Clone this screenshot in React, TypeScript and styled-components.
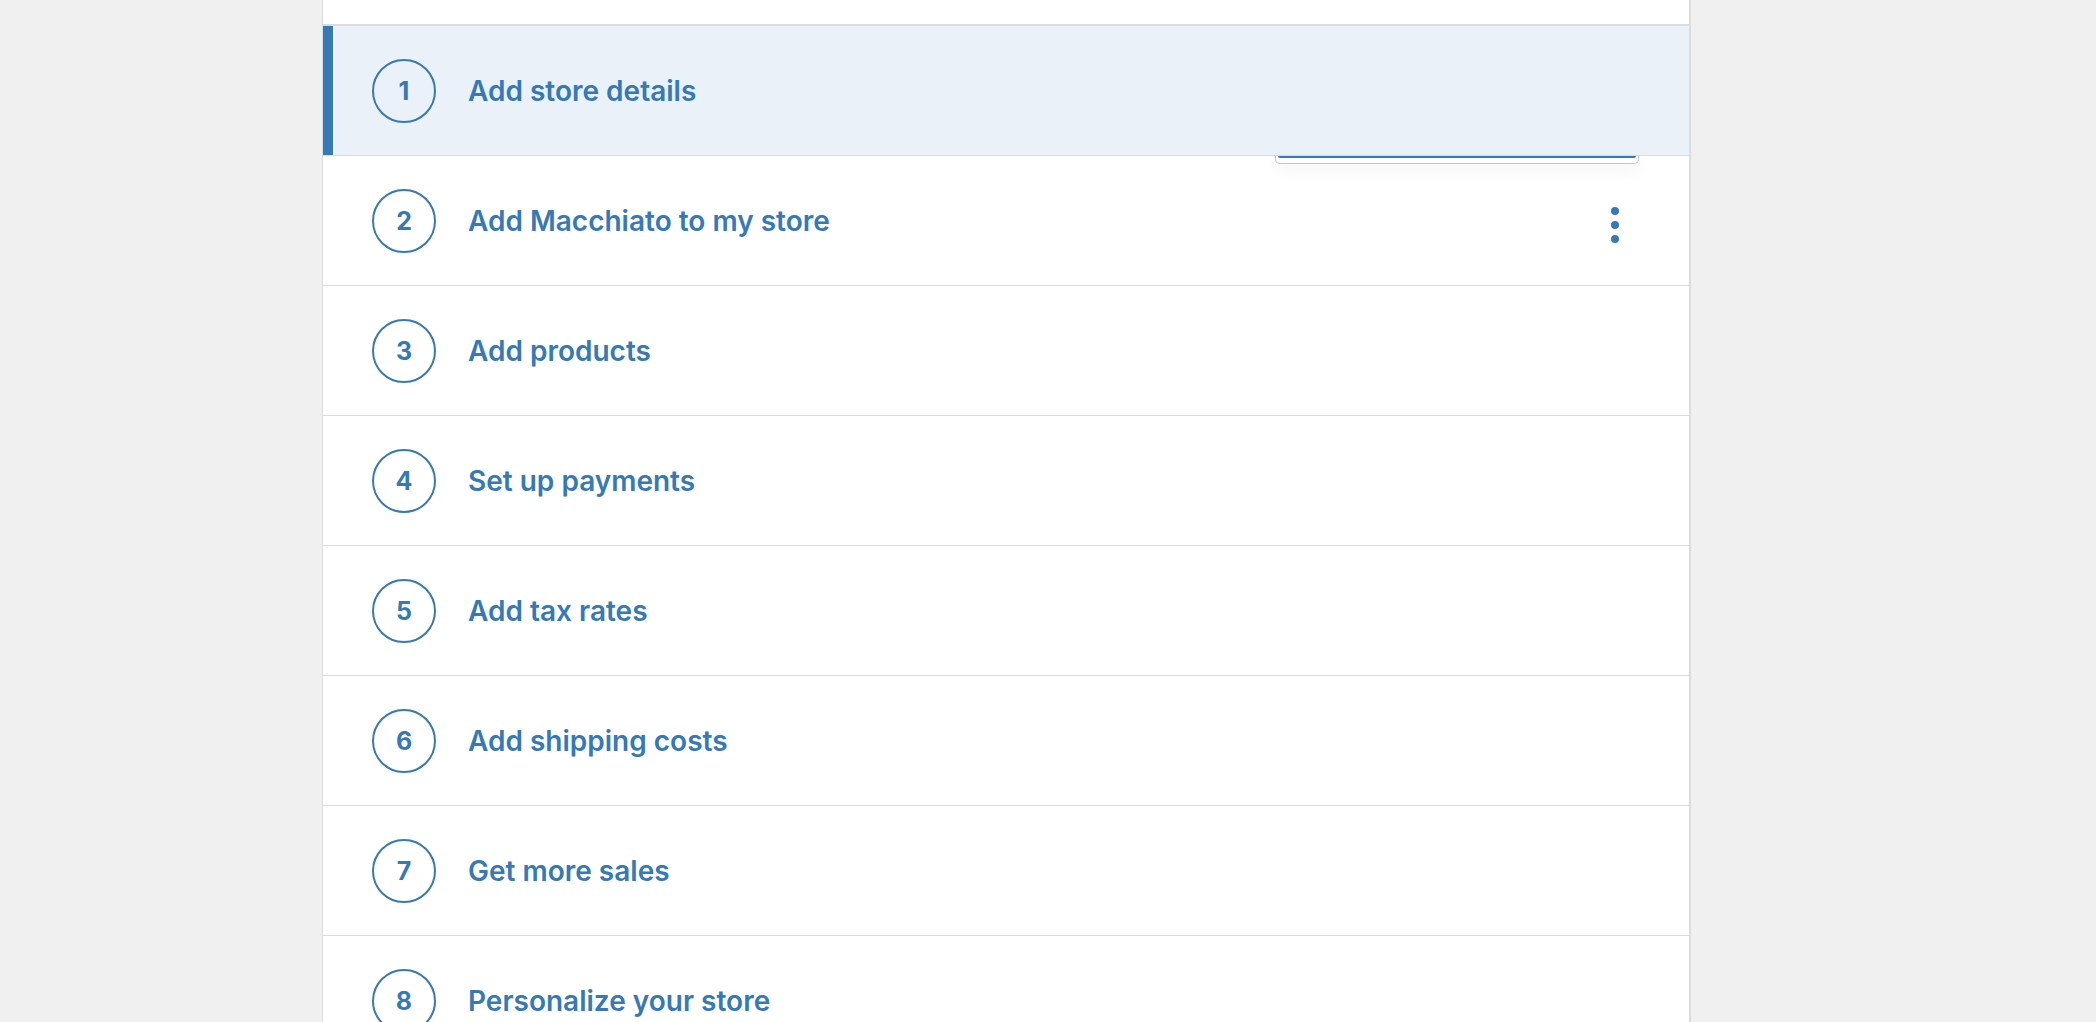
import React from "react";
import styled, { createGlobalStyle } from "styled-components";

const Global = createGlobalStyle`
  html, body { margin: 0; padding: 0; background: #f0f0f0; }
  body { font-family: Inter, "Noto Sans", "Liberation Sans", sans-serif; }
`;

const Page = styled.div`
  height: 1022px;
  overflow: hidden;
  display: flex;
  padding-left: 322px;
`;

const Panel = styled.div`
  width: 1366px;
  background: #fff;
  border-left: 1px solid #dcdcde;
  border-right: 2px solid #dcdcde;
  display: flex;
  flex-direction: column;
`;

const TopSpace = styled.div`
  height: 24px;
  flex: none;
  border-bottom: 2px solid #dcdcde;
`;

const Row = styled.div<{ $active?: boolean }>`
  position: relative;
  flex: none;
  height: 129px;
  border-bottom: 1.5px solid #dcdcde;
  display: flex;
  align-items: center;
  padding-left: 49px;
  padding-right: 70px;
  background: ${(p) => (p.$active ? "#eaf1f8" : "#fff")};
  box-shadow: ${(p) => (p.$active ? "inset 10px 0 0 #3579b6" : "none")};
`;

const Circle = styled.div`
  width: 60px;
  height: 60px;
  flex: none;
  border: 2px solid #3579b6;
  border-radius: 50%;
  display: flex;
  align-items: center;
  justify-content: center;
  color: #3579b6;
  font-size: 25px;
  font-weight: 700;
`;

const Title = styled.div`
  margin-left: 32px;
  flex: 1;
  color: #3579b6;
  font-size: 28px;
  font-weight: 600;
`;

const Kebab = styled.button`
  flex: none;
  border: 0;
  background: none;
  padding: 0;
  margin-top: 8px;
  width: 8px;
  height: 36px;
  display: flex;
  cursor: pointer;
`;

const Popover = styled.div`
  position: absolute;
  top: 0;
  left: 952px;
  width: 362px;
  height: 7px;
  background: #fff;
  border: 1.5px solid #c8c8c8;
  border-top: 0;
  border-radius: 0 0 5px 5px;
  box-shadow: 0 6px 14px rgba(0, 0, 0, 0.06);
  &::before {
    content: "";
    position: absolute;
    left: 2px;
    right: 2px;
    top: 0;
    height: 2px;
    background: #3579b6;
    border-radius: 0 0 4px 4px;
  }
`;

const steps = [
  "Add store details",
  "Add Macchiato to my store",
  "Add products",
  "Set up payments",
  "Add tax rates",
  "Add shipping costs",
  "Get more sales",
  "Personalize your store",
];

export default function App() {
  return (
    <>
      <Global />
      <Page>
        <Panel>
          <TopSpace />
          {steps.map((s, i) => (
            <Row key={s} $active={i === 0}>
              {i === 1 && <Popover />}
              <Circle>{i + 1}</Circle>
              <Title>{s}</Title>
              {i === 1 && (
                <Kebab aria-label="More options">
                  <svg width="8" height="36" viewBox="0 0 8 36">
                    <circle cx="4" cy="4" r="4" fill="#3579b6" />
                    <circle cx="4" cy="18" r="4" fill="#3579b6" />
                    <circle cx="4" cy="32" r="4" fill="#3579b6" />
                  </svg>
                </Kebab>
              )}
            </Row>
          ))}
        </Panel>
      </Page>
    </>
  );
}
